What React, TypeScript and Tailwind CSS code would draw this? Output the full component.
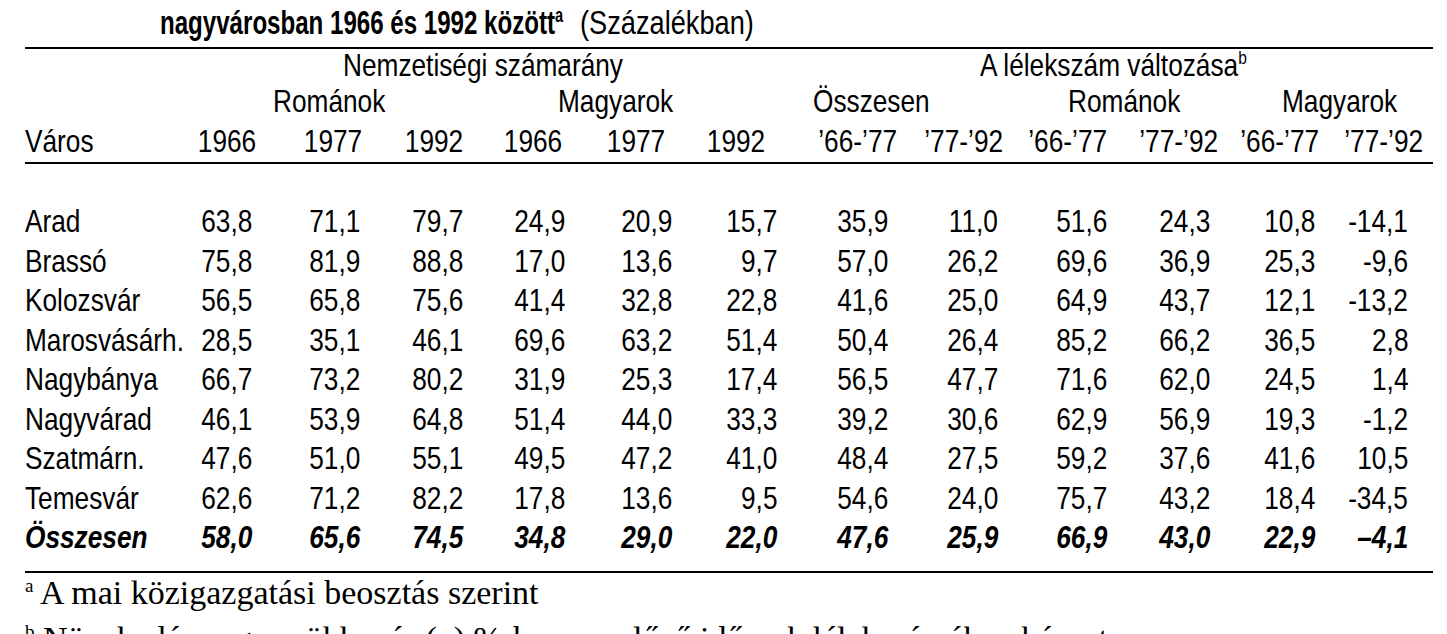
import React from "react";

const rows: { city: string; v: string[] }[] = [
  { city: "Arad", v: ["63,8", "71,1", "79,7", "24,9", "20,9", "15,7", "35,9", "11,0", "51,6", "24,3", "10,8", "-14,1"] },
  { city: "Brassó", v: ["75,8", "81,9", "88,8", "17,0", "13,6", "9,7", "57,0", "26,2", "69,6", "36,9", "25,3", "-9,6"] },
  { city: "Kolozsvár", v: ["56,5", "65,8", "75,6", "41,4", "32,8", "22,8", "41,6", "25,0", "64,9", "43,7", "12,1", "-13,2"] },
  { city: "Marosvásárh.", v: ["28,5", "35,1", "46,1", "69,6", "63,2", "51,4", "50,4", "26,4", "85,2", "66,2", "36,5", "2,8"] },
  { city: "Nagybánya", v: ["66,7", "73,2", "80,2", "31,9", "25,3", "17,4", "56,5", "47,7", "71,6", "62,0", "24,5", "1,4"] },
  { city: "Nagyvárad", v: ["46,1", "53,9", "64,8", "51,4", "44,0", "33,3", "39,2", "30,6", "62,9", "56,9", "19,3", "-1,2"] },
  { city: "Szatmárn.", v: ["47,6", "51,0", "55,1", "49,5", "47,2", "41,0", "48,4", "27,5", "59,2", "37,6", "41,6", "10,5"] },
  { city: "Temesvár", v: ["62,6", "71,2", "82,2", "17,8", "13,6", "9,5", "54,6", "24,0", "75,7", "43,2", "18,4", "-34,5"] },
];

const total = ["58,0", "65,6", "74,5", "34,8", "29,0", "22,0", "47,6", "25,9", "66,9", "43,0", "22,9", "–4,1"];

const years = ["1966", "1977", "1992", "1966", "1977", "1992", "’66-’77", "’77-’92", "’66-’77", "’77-’92", "’66-’77", "’77-’92"];

function L({ children }: { children: React.ReactNode }) {
  return <span className="inline-block scale-x-[0.82] origin-left">{children}</span>;
}

function R({ children }: { children: React.ReactNode }) {
  return <span className="inline-block scale-x-[0.82] origin-right">{children}</span>;
}

const dataCols =
  "grid grid-cols-[145px_82px_108px_103px_102px_107px_105px_111px_110px_109px_103px_105px_93px] h-[39.5px] leading-[39.5px] whitespace-nowrap";

export default function App() {
  return (
    <div className="w-[1447px] h-[634px] overflow-hidden bg-white text-black font-['Liberation_Sans',Arial,sans-serif]">
      {/* Title */}
      <div className="h-[47px] pl-[160px] pt-[4px] leading-[36px] whitespace-nowrap">
        <span className="inline-block w-[420px]">
          <span className="inline-block scale-x-[0.73] origin-left text-[33px] font-bold">
            nagyvárosban 1966 és 1992 között<sup className="text-[20px] -top-[12px]">a</sup>
          </span>
        </span>
        <span className="inline-block">
          <span className="inline-block scale-x-[0.8] origin-left text-[34px]">(Százalékban)</span>
        </span>
      </div>

      <div className="ml-[25px] w-[1408px] text-[32px]">
        <div className="border-t-[2px] border-black" />

        {/* Header row 1 */}
        <div className="flex h-[32px] leading-[32px] whitespace-nowrap">
          <div className="w-[318px] shrink-0" />
          <div className="w-[637px] shrink-0">
            <L>Nemzetiségi számarány</L>
          </div>
          <div>
            <L>
              A lélekszám változása<sup className="text-[19px] -top-[12px]">b</sup>
            </L>
          </div>
        </div>

        {/* Header row 2 */}
        <div className="flex h-[40px] leading-[40px] whitespace-nowrap">
          <div className="w-[248px] shrink-0" />
          <div className="w-[285px] shrink-0">
            <L>Románok</L>
          </div>
          <div className="w-[255px] shrink-0">
            <L>Magyarok</L>
          </div>
          <div className="w-[255px] shrink-0">
            <L>Összesen</L>
          </div>
          <div className="w-[214px] shrink-0">
            <L>Románok</L>
          </div>
          <div>
            <L>Magyarok</L>
          </div>
        </div>

        {/* Header row 3 */}
        <div className="grid grid-cols-[145px_86px_106px_101px_99px_103px_100px_132px_106px_104px_111px_101px_104px] h-[41px] leading-[41px] whitespace-nowrap">
          <div>
            <L>Város</L>
          </div>
          {years.map((y, i) => (
            <div key={i} className="text-right">
              <R>{y}</R>
            </div>
          ))}
        </div>

        <div className="border-t-[2px] border-black" />

        {/* Data */}
        <div className="pt-[38px]">
          {rows.map((r) => (
            <div key={r.city} className={dataCols}>
              <div>
                <L>{r.city}</L>
              </div>
              {r.v.map((x, i) => (
                <div key={i} className="text-right">
                  <R>{x}</R>
                </div>
              ))}
            </div>
          ))}
          <div className={`${dataCols} font-bold italic`}>
            <div>
              <L>Összesen</L>
            </div>
            {total.map((x, i) => (
              <div key={i} className="text-right">
                <R>{x}</R>
              </div>
            ))}
          </div>
        </div>

        <div className="mt-[13px] border-t-[2px] border-black" />

        {/* Footnotes */}
        <div className="font-['Liberation_Serif','Times_New_Roman',serif] text-[34px] whitespace-nowrap">
          <div className="h-[40px] leading-[40px]">
            <sup className="text-[19px] -top-[12px]">a</sup> A mai közigazgatási beosztás szerint
          </div>
          <div className="h-[40px] leading-[40px] mt-[6px]">
            <sup className="text-[19px] -top-[12px]">b</sup> Növekedés vagy csökkenés (–) %-ban, az előző időszak lélekszámához képest
          </div>
        </div>
      </div>
    </div>
  );
}
